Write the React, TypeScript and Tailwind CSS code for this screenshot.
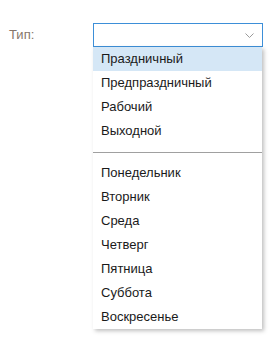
import React from 'react';

const holidayTypes = ['Праздничный', 'Предпраздничный', 'Рабочий', 'Выходной'];
const weekDays = ['Понедельник', 'Вторник', 'Среда', 'Четверг', 'Пятница', 'Суббота', 'Воскресенье'];

const App: React.FC = () => {
  return (
    <div className="w-[274px] h-[340px] bg-white font-['Liberation_Sans',Arial,sans-serif] text-[13px]">
      <div className="flex items-center pt-[23px] pl-[9px]">
        <span className="w-[84px] text-[#85766b]">Тип:</span>
        <div className="relative w-[170px]">
          <div className="h-[24px] border border-[#3d8fd8] bg-white flex items-center justify-end pr-[8px]">
            <svg width="9" height="5" viewBox="0 0 9 5" fill="none">
              <path d="M0.5 0.5 L4.5 4.5 L8.5 0.5" stroke="#9a9a9a" strokeWidth="1" />
            </svg>
          </div>
          <div className="absolute left-0 top-[24px] w-[169px] bg-white shadow-[2px_2px_4px_rgba(0,0,0,0.25)] text-[#1a1a1a]">
            {holidayTypes.map((t, i) => (
              <div key={t} className={`h-[24px] flex items-center pl-[8px] ${i === 0 ? 'bg-[#d5e7f6]' : ''}`}>
                {t}
              </div>
            ))}
            <div className="h-[18px] flex items-center">
              <div className="w-full h-px bg-[#a0a0a0]" />
            </div>
            {weekDays.map((d) => (
              <div key={d} className="h-[24px] flex items-center pl-[8px]">
                {d}
              </div>
            ))}
          </div>
        </div>
      </div>
    </div>
  );
};

export default App;
